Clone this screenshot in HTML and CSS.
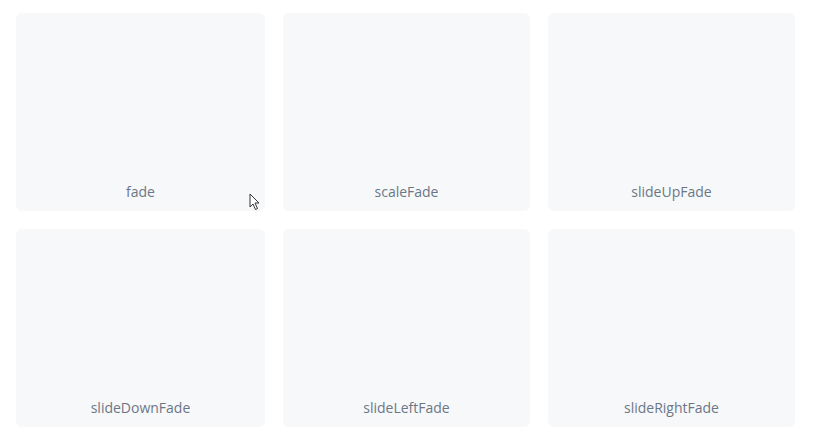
FILE: index.html
```html
<!DOCTYPE html>
<html>
<head>
<meta charset="utf-8">
<link rel="stylesheet" href="styles.css">
</head>
<body>
<div class="grid">
  <div class="card"><span class="label">fade</span></div>
  <div class="card"><span class="label">scaleFade</span></div>
  <div class="card"><span class="label">slideUpFade</span></div>
  <div class="card"><span class="label">slideDownFade</span></div>
  <div class="card"><span class="label">slideLeftFade</span></div>
  <div class="card"><span class="label">slideRightFade</span></div>
</div>
<svg class="cursor" width="12" height="18" viewBox="0 0 12 18"><path d="M1 1 L1 14 L4 11 L6.5 16.5 L8.5 15.5 L6 10 L10 10 Z" fill="#fff" stroke="#333" stroke-width="1"/></svg>
</body>
</html>
```
FILE: styles.css
```css
html, body { margin: 0; padding: 0; background: #fff; }
body {
  width: 816px;
  height: 440px;
  overflow: hidden;
  position: relative;
  font-family: "Open Sans", "Lato", sans-serif;
}
.grid {
  display: grid;
  grid-template-columns: 249px 247px 247px;
  grid-template-rows: 198px 198px;
  column-gap: 18px;
  row-gap: 18px;
  padding: 13px 21px 13px 16px;
}
.card {
  background: #f7f8fa;
  border-radius: 6px;
  display: flex;
  align-items: flex-end;
  justify-content: center;
  padding-bottom: 9px;
  box-sizing: border-box;
}
.label {
  color: #6b7787;
  font-size: 14px;
  line-height: 20px;
}
.cursor {
  position: absolute;
  left: 249px;
  top: 193px;
}
```
